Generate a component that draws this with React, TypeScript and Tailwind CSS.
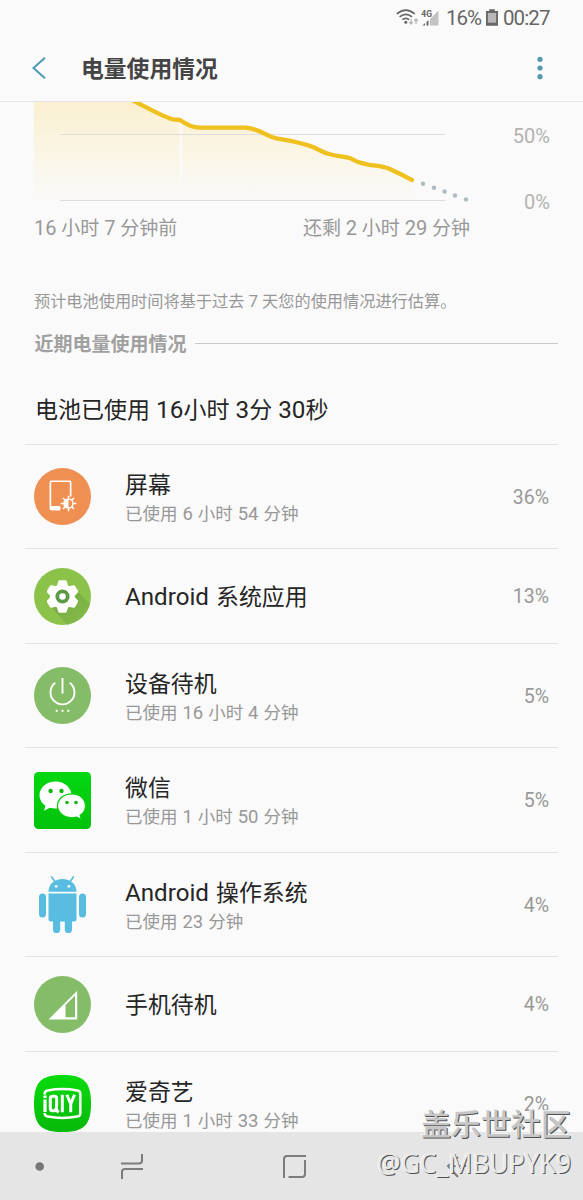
import type { ReactNode } from "react";

const ScreenIcon = () => (
  <svg width="57" height="57" viewBox="0.5 0.5 57 57" className="block">
    <circle cx="29" cy="29" r="28.5" fill="#f08f52" />
    <path fill="#fff" d="M16 15q0-2 2-2h18q2 0 2 2v14h-1.700V15.200q0-.6-.6-.6H18.300q-.6 0-.6.6v23.200h8.200q1 .6 1.400 1.400L26.500 43H18q-2 0-2-2z" />
    <g transform="translate(35 36)">
      <g stroke="#fff" strokeWidth="1.5">
        <path d="M0-7.800V-5M0 7.800V5M-7.800 0H-5M7.800 0H5M-5.500-5.500l2 2M5.500 5.500l-2-2M-5.500 5.500l2-2M5.500-5.500l-2 2" />
      </g>
      <circle r="4.500" fill="#f08f52" stroke="#fff" strokeWidth="1.500" />
      <path d="M0-4.400A4.400 4.400 0 0 0 0 4.400z" fill="#fff" />
    </g>
  </svg>
);

const GearIcon = () => (
  <svg width="57" height="57" viewBox="0.5 0.5 57 57" className="block">
    <defs>
      <clipPath id="gear-disc"><circle cx="29" cy="29" r="28.5" /></clipPath>
      <linearGradient id="gear-shade" x1="0" y1="0" x2="1" y2="1">
        <stop offset="0" stopColor="#72a83f" />
        <stop offset="1" stopColor="#88c04b" />
      </linearGradient>
    </defs>
    <circle cx="29" cy="29" r="28.5" fill="#8bc34a" />
    <path clipPath="url(#gear-disc)" d="M17 39L43 23L62 42V62H38z" fill="url(#gear-shade)" />
    <g fill="#fff">
      <circle cx="29" cy="29" r="12.300" />
      {[0, 60, 120, 180, 240, 300].map((angle) => (
        <path key={angle} transform={`rotate(${angle} 29 29)`} d="M23 19.500l1.700-5.500q.3-1.200 1.500-1.200h5.600q1.200 0 1.500 1.200l1.700 5.500z" />
      ))}
    </g>
    <circle cx="29" cy="29" r="5.200" fill="#fff" stroke="#5b9b47" strokeWidth="3.800" />
  </svg>
);

const StandbyIcon = () => (
  <svg width="57" height="57" viewBox="0.5 0.5 57 57" className="block">
    <circle cx="29" cy="29" r="28.5" fill="#85bc67" />
    <g fill="none" stroke="#fff" strokeWidth="1.9">
      <path d="M29 11.500V27" />
      <path d="M21.800 16.300a12 12 0 1 0 14.400 0" />
    </g>
    <g fill="#fff">
      <rect x="22.200" y="43.300" width="2" height="2" />
      <rect x="28" y="43.300" width="2" height="2" />
      <rect x="33.800" y="43.300" width="2" height="2" />
    </g>
  </svg>
);

const WeChatIcon = () => (
  <svg width="57" height="57" viewBox="0.5 0.5 57 57" className="block">
    <defs>
      <linearGradient id="chat-green" x1="0" y1="0" x2="0" y2="1">
        <stop offset="0" stopColor="#04d811" />
        <stop offset="1" stopColor="#02c20b" />
      </linearGradient>
    </defs>
    <rect x=".5" y=".5" width="57" height="57" rx="4.500" fill="url(#chat-green)" />
    <path fill="#fff" d="M22 10C13 10 6 16.200 6 23.700c0 4.300 2.400 8 6 10.500l-1.500 5.100 5.800-3.100c1.800.5 3.700.8 5.700.8 9 0 16-6 16-13.300S31 10 22 10z" />
    <path fill="#fff" stroke="#04cc0e" strokeWidth="1.300" d="M38.300 22.300c-8 0-14.300 5.200-14.300 12s6.300 12 14.300 12c1.700 0 3.400-.3 4.900-.7l4.800 2.700-1.300-4.400c3.300-2.200 5.400-5.700 5.400-9.600 0-6.800-5.900-12-13.800-12z" />
    <g fill="#10b817">
      <circle cx="17.100" cy="19.500" r="2.200" />
      <circle cx="28" cy="19.500" r="2.200" />
      <circle cx="33.500" cy="31" r="1.800" />
      <circle cx="42.500" cy="31" r="1.800" />
    </g>
  </svg>
);

const RobotIcon = () => (
  <svg width="57" height="57" viewBox="0.5 0.5 57 57" className="block">
    <g fill="#58bde1">
      <path d="M15 16.300C15 8.500 21 3.500 29 3.500s14 5 14 12.800z" />
      <path d="M15 18h28v25.500a2.500 2.500 0 0 1-2.500 2.500h-23a2.500 2.500 0 0 1-2.500-2.500z" />
      <rect x="5.500" y="18" width="7" height="24" rx="3.500" />
      <rect x="45.500" y="18" width="7" height="24" rx="3.500" />
      <rect x="19.500" y="36" width="7.200" height="21.500" rx="3.600" />
      <rect x="31.300" y="36" width="7.200" height="21.500" rx="3.600" />
    </g>
    <path d="M18.200 1.500l3.500 5M39.800 1.500l-3.500 5" stroke="#58bde1" strokeWidth="1.700" strokeLinecap="round" />
    <circle cx="22.600" cy="10.800" r="1.400" fill="#fff" />
    <circle cx="35.400" cy="10.800" r="1.400" fill="#fff" />
  </svg>
);

const CellIcon = () => (
  <svg width="57" height="57" viewBox="0.5 0.5 57 57" className="block">
    <circle cx="29" cy="29" r="28.500" fill="#85bc67" />
    <path fill="#fff" fillRule="evenodd" d="M43.700 15.200V44H15zM41.500 20L32 29.600V41.700H41.500z" />
  </svg>
);

const QiyiIcon = () => (
  <svg width="57" height="57" viewBox="0.5 0.5 57 57" className="block">
    <defs>
      <linearGradient id="qiyi-green" x1="0" y1="0" x2="0" y2="1">
        <stop offset="0" stopColor="#08dc0c" />
        <stop offset="1" stopColor="#08b80b" />
      </linearGradient>
    </defs>
    <path d="M29 .5C50 .5 57.500 7 57.500 29S50 57.500 29 57.500 .5 51 .5 29 8 .5 29 .5z" fill="url(#qiyi-green)" />
    <path d="M11.200 20v-1q0-2.500 3-3Q29 13.200 43.800 16q3 .5 3 3v20q0 2.500-3 3Q29 44.800 14.200 42q-3-.5-3-3v-.5" fill="none" stroke="#fff" strokeWidth="2.500" />
    <rect x="9.900" y="21" width="3.200" height="2.600" fill="#fff" />
    <rect x="9.900" y="25" width="3.200" height="12.500" fill="#fff" />
    <g fill="none" stroke="#fff" strokeWidth="3">
      <rect x="16.800" y="21.800" width="6.300" height="14.500" rx="2.200" />
      <path d="M21.500 33.500l3.500 4.500M28.800 20.300V37.800M33.400 20.300l3.800 9.200V37.800M41 20.300l-3.800 9.200" />
    </g>
  </svg>
);

interface Usage {
  name: string;
  detail?: string;
  percent: string;
  icon: ReactNode;
  height: string;
}

const usages: Usage[] = [
  { name: "屏幕", detail: "已使用 6 小时 54 分钟", percent: "36%", icon: <ScreenIcon />, height: "h-[104px]" },
  { name: "Android 系统应用", percent: "13%", icon: <GearIcon />, height: "h-[95px]" },
  { name: "设备待机", detail: "已使用 16 小时 4 分钟", percent: "5%", icon: <StandbyIcon />, height: "h-[104px]" },
  { name: "微信", detail: "已使用 1 小时 50 分钟", percent: "5%", icon: <WeChatIcon />, height: "h-[105px]" },
  { name: "Android 操作系统", detail: "已使用 23 分钟", percent: "4%", icon: <RobotIcon />, height: "h-[104px]" },
  { name: "手机待机", percent: "4%", icon: <CellIcon />, height: "h-[95px]" },
  { name: "爱奇艺", detail: "已使用 1 小时 33 分钟", percent: "2%", icon: <QiyiIcon />, height: "h-[104px]" },
];

/** Sets Latin words and digits slightly larger than the Chinese text around them. */
function Mixed({ text }: { text: string }) {
  return (
    <>
      {text.split(/([A-Za-z0-9]+)/).map((part, index) =>
        index % 2 === 1 ? (
          <span key={index} className="text-[1.055em] leading-none">{part}</span>
        ) : (
          part
        ),
      )}
    </>
  );
}

function UsageRow({ usage }: { usage: Usage }) {
  return (
    <li className={`${usage.height} flex items-center border-t border-[#e3e3e3] pr-[9px] pl-[9px]`}>
      <div className="w-[91px] shrink-0">{usage.icon}</div>
      <div className={usage.detail ? "flex-1 pt-[5px]" : "flex-1 pt-[3px]"}>
        <div className="text-[22.9px] leading-[30px] text-[#252525] [word-spacing:1.5px]">
          <Mixed text={usage.name} />
        </div>
        {usage.detail && (
          <div className="text-[17.5px] leading-[27px] text-[#989898] [word-spacing:0.6px]">
            <Mixed text={usage.detail} />
          </div>
        )}
      </div>
      <div className="pt-[2px] text-[19.5px] text-[#989898]">{usage.percent}</div>
    </li>
  );
}

function StatusBar() {
  return (
    <div className="flex h-9 items-center pl-[396px] text-[#666]">
      <svg width="50" height="20" viewBox="0 0 50 20" className="shrink-0">
        <g fill="none" stroke="#666" strokeWidth="1.700">
          <path d="M.8 5.800q9-7.500 18 0M3.600 8.800q6.200-5 12.400 0M6.400 11.700q3.400-2.700 6.800 0" />
        </g>
        <circle cx="9.800" cy="14.200" r="1.500" fill="#666" />
        <path d="M15 11v5M13.200 14.200l1.800 2 1.800-2M20 16v-5M18.200 13l1.800-2 1.800 2" fill="none" stroke="#b5b5b5" strokeWidth="1.200" />
        <path d="M42.500 2.500V17.500H34V11z" fill="#c2c2c2" />
        <path d="M32.500 12v5.500h-2V14zM29 15v2.500h-2.500z" fill="#666" />
        <text x="25.300" y="8.500" fill="#666" className="font-['Roboto'] text-[8.5px] font-bold">4G</text>
      </svg>
      <span className="w-[38px] shrink-0 text-[20.5px] leading-none tracking-[-1px]">16%</span>
      <svg width="12" height="18" viewBox="0 0 13 19" className="ml-0.5 shrink-0">
        <path d="M3.500 0h6v2H13v16H0V2h3.500z" fill="#666" />
        <rect x="2" y="4" width="9" height="10.500" fill="#b8b8b8" />
      </svg>
      <span className="ml-[5px] text-[20.5px] leading-none tracking-[-0.9px]">00:27</span>
    </div>
  );
}

function BatteryChart() {
  return (
    <div className="flex h-[108px] shrink-0 justify-between pr-[33px]">
      <svg width="480" height="108" viewBox="0 102 480 108" className="block">
        <defs>
          <linearGradient id="charge" gradientUnits="userSpaceOnUse" x1="0" y1="102" x2="0" y2="203">
            <stop offset="0" stopColor="#faf0d0" />
            <stop offset="1" stopColor="#fafafa" />
          </linearGradient>
        </defs>
        <path d="M34 100H130C150 109 165 118 180 120.500C187 125 193 127.500 200 127.500H245C259 128 265 136 277 138C290 140 300 142 313 146C320 149 323 152 331 154C339 156 345 157 351 158.500C357 162 361 163 367 164.500C376 166 382 166 388 168.500C397 172 404 177 413 180V200H34z" fill="url(#charge)" />
        <path d="M181 121V200" stroke="#fafafa" strokeWidth="2.500" />
        <path d="M60 134.500H445M60 200.500H445" stroke="#dedddb" />
        <path d="M128 98C150 109 165 118 173 119.300L180 120C187 125 193 127.700 200 127.700H245C259 128 265 136 277 138.500C290 140.500 300 142 313 147C320 150 323 153 331 154.500C339 156.500 345 156.500 351 158.500C357 162.500 361 163 367 164.300C376 166 382 166 388 168.300C397 172 404 176 412 180" fill="none" stroke="#f0c01e" strokeWidth="4.300" strokeLinejoin="round" strokeLinecap="round" />
        <g fill="#aebbc0">
          <circle cx="423" cy="183.700" r="2.200" />
          <circle cx="434" cy="187.700" r="2.200" />
          <circle cx="444.600" cy="191.500" r="2.200" />
          <circle cx="455" cy="195.500" r="2.200" />
          <circle cx="466" cy="199.400" r="2.200" />
        </g>
      </svg>
      <div className="flex flex-col items-end gap-[36px] pt-[19px] text-[20px] leading-[30px] text-[#b3b3b3]">
        <span>50%</span>
        <span>0%</span>
      </div>
    </div>
  );
}

export default function App() {
  return (
    <div lang="zh-CN" className="relative flex h-[1200px] w-[583px] flex-col overflow-hidden bg-[#fafafa] font-['Roboto','Noto_Sans_CJK_SC',sans-serif]">
      <StatusBar />
      <header className="flex h-[66px] shrink-0 items-center border-b border-[#e5e5e5] pr-[34px] pl-8">
        <svg width="14" height="22" viewBox="0 0 14 22" className="mb-px">
          <path d="M13 .8L1.500 11L13 21.200" fill="none" stroke="#4c9ab3" strokeWidth="2" />
        </svg>
        <h1 className="ml-[35px] flex-1 pt-[2px] text-[22.8px] leading-[32px] font-bold text-[#444]">电量使用情况</h1>
        <svg width="20" height="24" viewBox="0 0 20 24" fill="#539aae" className="mb-px">
          <circle cx="11" cy="3.300" r="2.600" />
          <circle cx="11" cy="12" r="2.600" />
          <circle cx="11" cy="20.700" r="2.600" />
        </svg>
      </header>

      <main className="flex h-[1030px] shrink-0 flex-col overflow-hidden">
        <BatteryChart />
        <div className="flex h-[38px] shrink-0 items-center justify-between pr-[113px] pl-[34px] text-[19px] text-[#989898] [word-spacing:0.1px]">
          <span><Mixed text="16 小时 7 分钟前" /></span>
          <span><Mixed text="还剩 2 小时 29 分钟" /></span>
        </div>
        <p className="mt-[42px] h-6 shrink-0 pl-[34px] text-[16.2px] leading-6 text-[#989898]">
          <Mixed text="预计电池使用时间将基于过去 7 天您的使用情况进行估算。" />
        </p>
        <div className="mt-[14px] flex h-[32px] shrink-0 items-center gap-2 pr-[25px] pl-[34.5px]">
          <h2 className="pt-[2px] text-[19px] leading-[32px] font-bold text-[#a0a0a0]">近期电量使用情况</h2>
          <div className="mb-px h-px flex-1 bg-[#c9c9c9]" />
        </div>
        <div className="mt-[35px] h-[49px] shrink-0 pl-[35px] text-[23px] leading-[32px] text-[#252525] [word-spacing:0.4px]">
          <Mixed text="电池已使用 16小时 3分 30秒" />
        </div>
        <ul className="mx-[25px]">
          {usages.map((usage) => <UsageRow key={usage.name} usage={usage} />)}
        </ul>
      </main>

      <nav className="flex h-[68px] shrink-0 items-center bg-[#e5e5e5]">
        <svg width="583" height="68" viewBox="0 1132 583 68" className="block">
          <circle cx="39.700" cy="1166.500" r="4.300" fill="#777" />
          <g fill="none" stroke="#7c7c7c" strokeWidth="2">
            <path d="M121 1163.500H139Q142 1163.500 142 1160.500V1154M143 1169H125Q122 1169 122 1172V1179" />
            <path d="M284 1178V1159Q284 1156 287 1156H306M305 1160V1174Q305 1177 302 1177H288.500" />
            <path d="M467 1166H448M458 1157L448 1166L458 1177" />
          </g>
        </svg>
      </nav>

      <div className="absolute top-[1105px] right-[12px] flex flex-col items-end font-['Noto_Sans','Noto_Sans_CJK_SC',sans-serif] whitespace-nowrap">
        <div className="text-[30px] leading-[38px] font-medium text-[#c6c6c6] [text-shadow:1px_1px_0_#505050,-1px_-1px_0_#f5f5f5]">盖乐世社区</div>
        <div className="text-[26.4px] leading-[41px] text-[#e9e9e9] [text-shadow:1px_1px_0_#505050,-1px_0_0_#f5f5f5]">@GC_MBUPYK9</div>
      </div>
    </div>
  );
}
